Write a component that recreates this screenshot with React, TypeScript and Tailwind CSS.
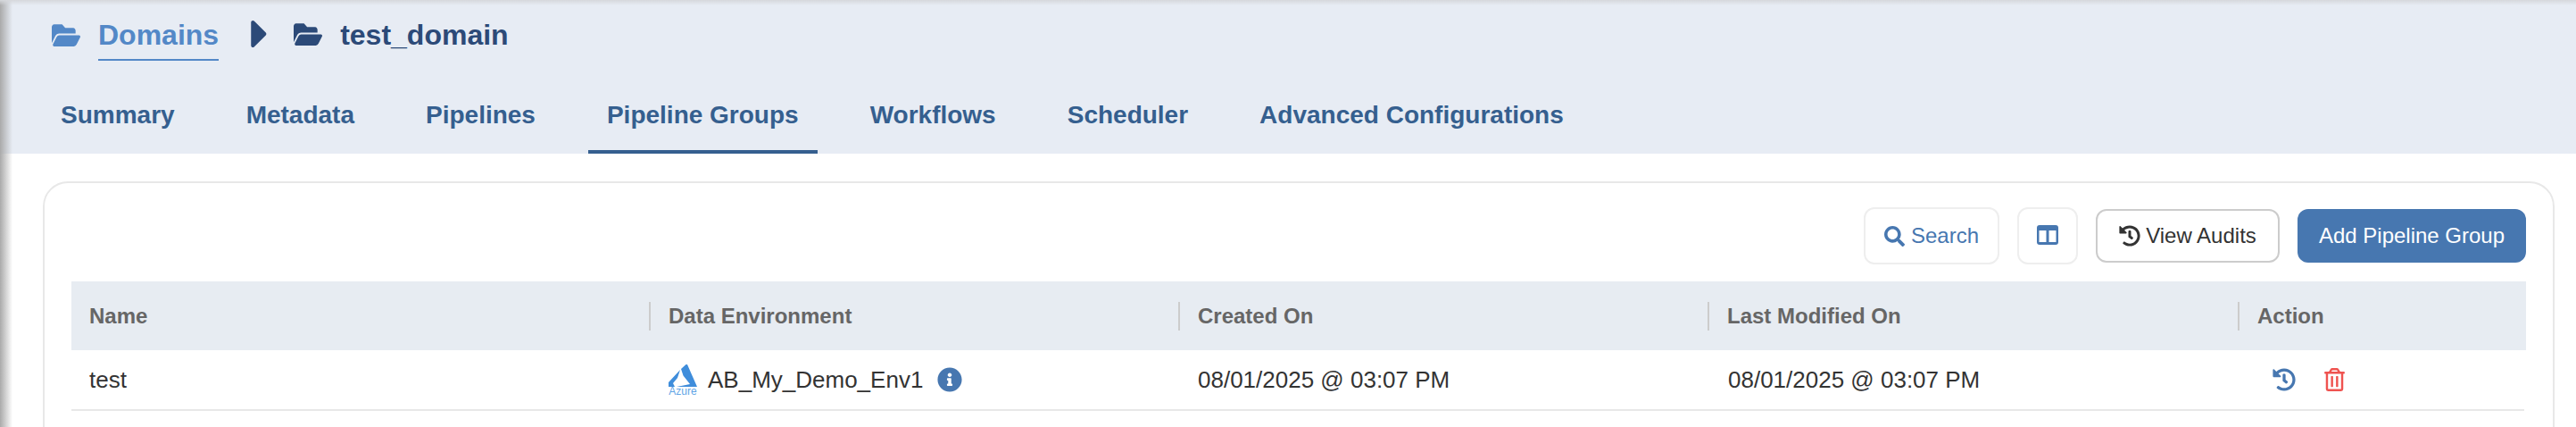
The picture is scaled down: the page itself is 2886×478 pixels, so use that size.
import { FaFolderOpen, FaCaretRight, FaSearch, FaHistory, FaInfoCircle, FaRegTrashAlt } from "react-icons/fa";

const tabs = ["Summary", "Metadata", "Pipelines", "Pipeline Groups", "Workflows", "Scheduler", "Advanced Configurations"];
const cols = ["Name", "Data Environment", "Created On", "Last Modified On", "Action"];

function AzureLogo() {
  return (
    <div className="flex w-[32px] flex-col items-center">
      <svg viewBox="0 0 32 25" className="h-[25px] w-[32px]">
        <path d="M14 5 L19.5 0 L21 0 L32 25 L9 25 L24 22 L16.5 12.5 Z" fill="#3f8ddb" />
        <path d="M13 6 L0 20 L0 25 L7 25 L5 21 L10 15 Z" fill="#3f8ddb" />
      </svg>
      <span className="text-[12px] leading-[10px] text-[#62a5e6]">Azure</span>
    </div>
  );
}

function ColumnsIcon() {
  return (
    <svg viewBox="0 0 24 24" className="h-[24px] w-[24px]">
      <rect x="0" y="0" width="24" height="22" rx="3" fill="#4777b0" />
      <rect x="2.5" y="6" width="8" height="13" fill="#fff" />
      <rect x="13.5" y="6" width="8" height="13" fill="#fff" />
    </svg>
  );
}

function Folder({ className }: { className: string }) {
  return <FaFolderOpen preserveAspectRatio="none" className={className} />;
}

export default function App() {
  return (
    <div className="relative h-[478px] w-full overflow-hidden bg-white font-['Liberation_Sans',Arial,sans-serif]">
      <div className="pointer-events-none absolute inset-y-0 left-0 w-[14px] bg-gradient-to-r from-[#aaaaaa] to-transparent" />
      <div className="pointer-events-none absolute inset-x-0 top-0 h-[6px] bg-gradient-to-b from-[#d6d8dc] to-transparent" />

      <header className="flex h-[172px] flex-col bg-[#e7ecf4]">
        <div className="flex h-[84px] items-start pl-[58px] pt-[18px]">
          <Folder className="mt-[5px] h-[33px] w-[32px] text-[#5388c7]" />
          <span className="ml-[20px] h-[50px] border-b-2 border-[#5388c7] text-[32px] font-bold leading-[42px] text-[#5388c7]">Domains</span>
          <FaCaretRight className="ml-[36px] mt-[-6px] h-[52px] w-[20px] text-[#2c4a78]" />
          <Folder className="ml-[28px] mt-[4px] h-[33px] w-[32px] text-[#2c4a78]" />
          <span className="ml-[20px] text-[32px] font-bold leading-[42px] text-[#2c4a78]">test_domain</span>
        </div>
        <nav className="flex flex-1 items-stretch gap-[38px] pl-[47px]">
          {tabs.map((t) => (
            <div
              key={t}
              className={`flex items-center border-b-4 px-[21px] pt-[5px] text-[28px] font-bold text-[#355f8f] ${t === "Pipeline Groups" ? "border-[#355f8f]" : "border-transparent"}`}
            >
              {t}
            </div>
          ))}
        </nav>
      </header>

      <main className="px-[24px] pl-[48px] pt-[31px]">
        <section className="h-[400px] rounded-[28px] border-2 border-[#e8e8e8] px-[30px] pt-[27px]">
          <div className="flex h-[64px] items-center justify-end gap-[20px]">
            <button className="flex h-[64px] w-[152px] items-center justify-center gap-[7px] rounded-[12px] border-2 border-[#eeeeee] text-[24px] text-[#4777b0]">
              <FaSearch className="h-[23px] w-[23px]" />
              Search
            </button>
            <button className="flex h-[64px] w-[68px] items-center justify-center rounded-[12px] border-2 border-[#eeeeee]">
              <ColumnsIcon />
            </button>
            <button className="flex h-[60px] w-[206px] items-center justify-center gap-[6px] rounded-[12px] border-2 border-[#cccccc] text-[24px] text-[#333333]">
              <FaHistory className="h-[24px] w-[24px]" />
              View Audits
            </button>
            <button className="flex h-[60px] w-[256px] items-center justify-center rounded-[12px] bg-[#4777b0] text-[24px] text-white">
              Add Pipeline Group
            </button>
          </div>

          <div className="mt-[19px] grid h-[77px] grid-cols-[647px_593px_593px_594px_1fr] items-center bg-[#e7ecf2] text-[24px] font-bold text-[#666666]">
            {cols.map((c, i) => (
              <div
                key={c}
                className={i === 0 ? "pl-[20px]" : "flex h-[32px] items-center border-l-2 border-[#cccccc] pl-[20px]"}
              >
                {c}
              </div>
            ))}
          </div>

          <div className="mr-[2px] grid h-[68px] grid-cols-[647px_593px_593px_594px_1fr] items-center border-b-2 border-[#e8e8e8] text-[26px] text-[#333333]">
            <div className="pl-[20px]">test</div>
            <div className="flex items-center pl-[22px]">
              <AzureLogo />
              <span className="ml-[12px]">AB_My_Demo_Env1</span>
              <FaInfoCircle className="ml-[16px] h-[28px] w-[28px] text-[#4777b0]" />
            </div>
            <div className="pl-[22px]">08/01/2025 @ 03:07 PM</div>
            <div className="pl-[23px]">08/01/2025 @ 03:07 PM</div>
            <div className="flex items-center gap-[32px] pl-[39px]">
              <FaHistory className="h-[26px] w-[26px] text-[#4777b0]" />
              <FaRegTrashAlt className="h-[26px] w-[23px] text-[#ef5350]" />
            </div>
          </div>
        </section>
      </main>
    </div>
  );
}
